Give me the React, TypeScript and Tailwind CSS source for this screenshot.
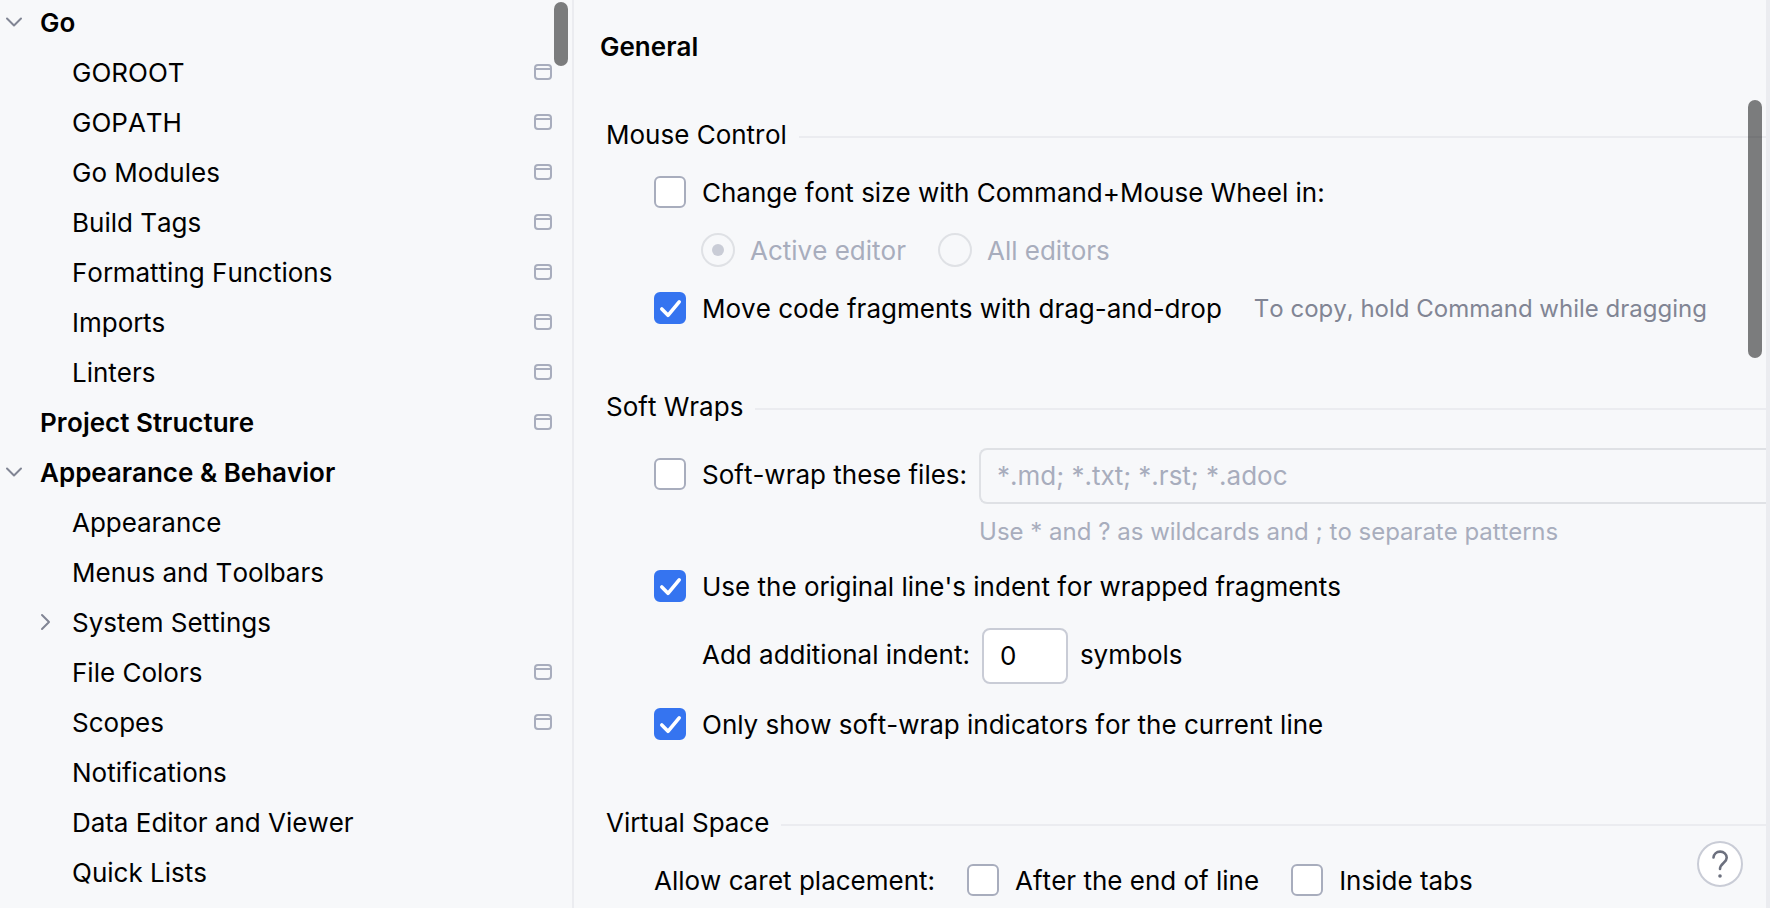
import React, { useState } from 'react';
import clsx from 'clsx';

interface TreeItem {
  label: string;
  level: 0 | 1;
  chevron?: 'open' | 'closed';
  projectLevel?: boolean;
}

const treeItems: TreeItem[] = [
  { label: 'Go', level: 0, chevron: 'open' },
  { label: 'GOROOT', level: 1, projectLevel: true },
  { label: 'GOPATH', level: 1, projectLevel: true },
  { label: 'Go Modules', level: 1, projectLevel: true },
  { label: 'Build Tags', level: 1, projectLevel: true },
  { label: 'Formatting Functions', level: 1, projectLevel: true },
  { label: 'Imports', level: 1, projectLevel: true },
  { label: 'Linters', level: 1, projectLevel: true },
  { label: 'Project Structure', level: 0, projectLevel: true },
  { label: 'Appearance & Behavior', level: 0, chevron: 'open' },
  { label: 'Appearance', level: 1 },
  { label: 'Menus and Toolbars', level: 1 },
  { label: 'System Settings', level: 1, chevron: 'closed' },
  { label: 'File Colors', level: 1, projectLevel: true },
  { label: 'Scopes', level: 1, projectLevel: true },
  { label: 'Notifications', level: 1 },
  { label: 'Data Editor and Viewer', level: 1 },
  { label: 'Quick Lists', level: 1 },
];

const Chevron: React.FC<{ state?: 'open' | 'closed' }> = ({ state }) => (
  <svg className="size-8 shrink-0" viewBox="0 0 32 32" fill="none" stroke="#818594" strokeWidth="2" strokeLinecap="round" strokeLinejoin="round">
    {state === 'open' && <path d="M7 12.500l7 7 7-7" />}
    {state === 'closed' && <path d="M10 9l7 7-7 7" />}
  </svg>
);

const ProjectLevelIcon = () => (
  <svg className="h-4 w-[18px] shrink-0" viewBox="0 0 18 16" fill="none" stroke="#a8adbd" strokeWidth="2">
    <rect x="1" y="1" width="16" height="14" rx="3" />
    <path d="M1 5h16" />
  </svg>
);

const TreeRow: React.FC<{ item: TreeItem }> = ({ item }) => (
  <li>
    <button
      type="button"
      className={clsx(
        'flex h-[50px] w-full items-center pr-5 text-left',
        item.level === 0 ? 'font-semibold' : 'pl-8'
      )}
    >
      <Chevron state={item.chevron} />
      <span className="ml-2 flex-1 truncate pt-0.5">{item.label}</span>
      {item.projectLevel && <ProjectLevelIcon />}
    </button>
  </li>
);

interface CheckboxProps {
  label: string;
  defaultChecked?: boolean;
  className?: string;
}

const Checkbox: React.FC<CheckboxProps> = ({ label, defaultChecked = false, className }) => {
  const [checked, setChecked] = useState(defaultChecked);

  return (
    <label className={clsx('flex shrink-0 items-center gap-4', className)}>
      <span className="relative flex">
        <input
          type="checkbox"
          checked={checked}
          onChange={(e) => setChecked(e.target.checked)}
          className="size-8 appearance-none rounded-md border-2 border-[#a8adbd] bg-white checked:border-[#3574f0] checked:bg-[#3574f0]"
        />
        {checked && (
          <svg className="pointer-events-none absolute inset-0 size-8" viewBox="0 0 32 32" fill="none" stroke="white" strokeWidth="3.600" strokeLinecap="round" strokeLinejoin="round">
            <path d="M7.800 17l6.200 6.300L25.200 9.800" />
          </svg>
        )}
      </span>
      <span className="pt-0.5">{label}</span>
    </label>
  );
};

const Radio: React.FC<{ label: string; defaultChecked?: boolean }> = ({ label, defaultChecked }) => (
  <label className="flex items-center gap-[15px]">
    <span className="relative flex">
      <input
        type="radio"
        name="zoom-scope"
        disabled
        defaultChecked={defaultChecked}
        className="peer size-[34px] appearance-none rounded-full border-2 border-[#dfe1e5]"
      />
      <span className="pointer-events-none absolute inset-[11px] hidden rounded-full bg-[#c9ccd6] peer-checked:block" />
    </span>
    <span className="pt-0.5">{label}</span>
  </label>
);

const Section: React.FC<{ title: string; children: React.ReactNode }> = ({ title, children }) => (
  <section>
    <div className="flex h-[58px] items-center gap-3 pl-1.5">
      <h2 className="pt-0.5">{title}</h2>
      <span className="mt-1.5 h-0.5 flex-1 bg-[#ebecf0]" />
    </div>
    <div className="pl-[54px]">{children}</div>
  </section>
);

const App: React.FC = () => {
  const [indent, setIndent] = useState('0');

  return (
    <div className="flex h-screen overflow-hidden bg-[#f7f8fa] font-['Inter',sans-serif] text-[26px] leading-8 text-black [font-kerning:none]">
      {/* Settings tree */}
      <nav className="relative w-[574px] shrink-0 overflow-hidden border-r-2 border-[#ebecf0]">
        <ul className="-mt-[3px]">
          {treeItems.map((item) => (
            <TreeRow key={item.label} item={item} />
          ))}
        </ul>
        <div className="absolute top-0.5 right-1 h-16 w-3.5 rounded-full bg-black/50" />
      </nav>

      {/* Settings page */}
      <main className="relative min-w-0 flex-1 overflow-hidden border-r-4 border-[#ebecf0] pl-[26px] whitespace-nowrap">
        <h1 className="pt-[31px] pb-[42px] font-semibold">General</h1>

        <div className="flex flex-col gap-10">
          <Section title="Mouse Control">
            <Checkbox label="Change font size with Command+Mouse Wheel in:" className="h-[58px]" />
            <div className="flex h-[58px] items-center gap-8 pl-[47px] text-[#a8adbd]">
              <Radio label="Active editor" defaultChecked />
              <Radio label="All editors" />
            </div>
            <div className="flex h-[58px] items-center gap-8">
              <Checkbox label="Move code fragments with drag-and-drop" defaultChecked />
              <span className="pt-0.5 text-2xl text-[#818594]">To copy, hold Command while dragging</span>
            </div>
          </Section>

          <Section title="Soft Wraps">
            <div className="flex items-start gap-3 pt-[13px]">
              <Checkbox label="Soft-wrap these files:" className="h-[52px]" />
              <div className="min-w-0 flex-1">
                <input
                  type="text"
                  disabled
                  aria-label="Soft-wrap file patterns"
                  placeholder="*.md; *.txt; *.rst; *.adoc"
                  className="block h-14 w-full rounded-l-lg border-2 border-r-0 border-[#dfe1e5] px-4 pb-0.5 placeholder:text-[#a8adbd]"
                />
                <p className="flex h-[53px] items-center pt-0.5 text-2xl text-[#a8adbd]">
                  Use * and ? as wildcards and ; to separate patterns
                </p>
              </div>
            </div>
            <Checkbox label="Use the original line's indent for wrapped fragments" defaultChecked className="h-[58px]" />
            <div className="flex items-start gap-3 pt-[13px] pb-[11px] pl-12">
              <label htmlFor="indent" className="flex h-[52px] items-center pt-0.5">Add additional indent:</label>
              <input
                id="indent"
                type="text"
                value={indent}
                onChange={(e) => setIndent(e.target.value)}
                className="h-14 w-[86px] rounded-lg border-2 border-[#c9ccd6] bg-white px-4 pb-0.5"
              />
              <span className="flex h-[52px] items-center pt-0.5">symbols</span>
            </div>
            <Checkbox label="Only show soft-wrap indicators for the current line" defaultChecked className="h-[58px]" />
          </Section>

          <Section title="Virtual Space">
            <div className="flex h-[58px] items-center gap-8">
              <span className="pt-0.5">Allow caret placement:</span>
              <Checkbox label="After the end of line" />
              <Checkbox label="Inside tabs" />
            </div>
          </Section>
        </div>

        <div className="absolute top-[100px] right-1 h-[258px] w-3.5 rounded-full bg-black/50" />
        <button
          type="button"
          aria-label="Help"
          className="absolute right-[23px] bottom-[21px] flex size-[46px] items-center justify-center rounded-full border-2 border-[#c9ccd6] bg-white"
        >
          <svg className="size-8" viewBox="0 0 32 32" fill="none" stroke="#6c707e" strokeWidth="2.600" strokeLinecap="round">
            <path d="M9.500 9.500c.2-3.200 2.900-5.900 6.600-5.900 3.700 0 6.600 2.700 6.600 6.200 0 5-6.700 5.600-6.700 11.200" />
            <circle cx="16" cy="28" r="1.800" fill="#6c707e" stroke="none" />
          </svg>
        </button>
      </main>
    </div>
  );
};

export default App;
